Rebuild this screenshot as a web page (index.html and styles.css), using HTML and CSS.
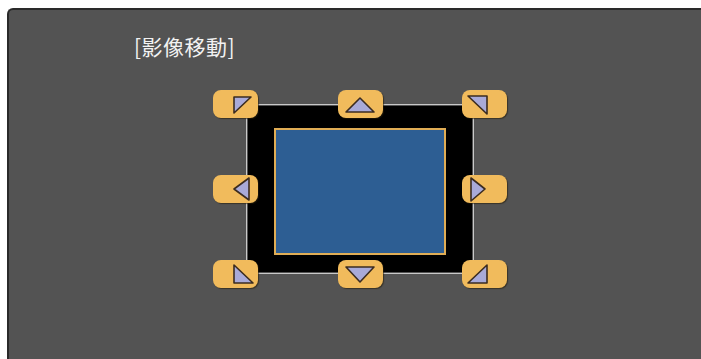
FILE: index.html
```html
<!DOCTYPE html>
<html>
<head>
    <meta charset="utf-8">
    <title>影像移動</title>
    <link rel="stylesheet" href="styles.css">
</head>
<body>
    <div class="panel">
        <h3 class="title">[影像移動]</h3>
        <div class="stage">
            <div class="frame">
                <div class="screen"></div>
            </div>

            <div class="btn tl"><svg viewBox="0 0 45 28"><polygon points="21,7 38,7 21,23"/></svg></div>
            <div class="btn tm"><svg viewBox="0 0 45 28"><polygon points="8,22 22,8 36,22"/></svg></div>
            <div class="btn tr"><svg viewBox="0 0 45 28"><polygon points="6,6 25,6 25,24"/></svg></div>
            <div class="btn ml"><svg viewBox="0 0 45 28"><polygon points="36,3 36,25 21,14"/></svg></div>
            <div class="btn mr"><svg viewBox="0 0 45 28"><polygon points="9,3 9,26 23,14"/></svg></div>
            <div class="btn bl"><svg viewBox="0 0 45 28"><polygon points="21,5 21,23 40,23"/></svg></div>
            <div class="btn bm"><svg viewBox="0 0 45 28"><polygon points="8,7 36,7 22,22"/></svg></div>
            <div class="btn br"><svg viewBox="0 0 45 28"><polygon points="25,5 25,23 6,23"/></svg></div>
        </div>
    </div>
</body>
</html>
```

FILE: styles.css
```css
html, body {
    height: 100%;
}
body {
    margin: 0;
    background-color: #fff;
    font-family: "Noto Sans CJK TC", "Noto Sans", sans-serif;
    overflow: hidden;
}

.panel {
    box-sizing: border-box;
    margin: 8px 0 0 7px;
    height: calc(100% - 8px);
    background-color: #535353;
    border-top: 2px solid #2a2a2a;
    border-left: 2px solid #2a2a2a;
    border-top-left-radius: 6px;
    padding: 26px 0 0 125px;
}

.title {
    margin: 0;
    font-size: 21px;
    font-weight: normal;
    line-height: 21px;
    color: #f2f2f2;
    letter-spacing: 0.5px;
}

.stage {
    position: relative;
    box-sizing: border-box;
    width: 295px;
    height: 198px;
    margin: 33px 0 0 78px;
    padding: 16px 0 0 36px;
}

.frame {
    box-sizing: border-box;
    width: 224px;
    height: 166px;
    padding: 22px 0 0 26px;
    background-color: #000;
    outline: 1px solid #c9c9c9;
    outline-offset: 1px;
}

.screen {
    box-sizing: border-box;
    width: 172px;
    height: 127px;
    background-color: #2d5e93;
    border: 2px solid #e0ad55;
}

/* direction buttons */
.btn {
    position: absolute;
    width: 45px;
    height: 28px;
    border-radius: 8px;
    background-color: #f1bb5c;
    box-shadow: 1px 1px 1px rgba(40, 30, 10, 0.6);
}
.btn svg {
    display: block;
    width: 45px;
    height: 28px;
}
.btn polygon {
    fill: #a9aad8;
    stroke: #3b2c20;
    stroke-width: 1.6;
    stroke-linejoin: round;
}

.tl { left: 1px;   top: 0; }
.tm { left: 126px; top: 0; }
.tr { left: 250px; top: 0; }
.ml { left: 1px;   top: 85px; }
.mr { left: 250px; top: 85px; }
.bl { left: 1px;   top: 170px; }
.bm { left: 126px; top: 170px; }
.br { left: 250px; top: 170px; }
```
